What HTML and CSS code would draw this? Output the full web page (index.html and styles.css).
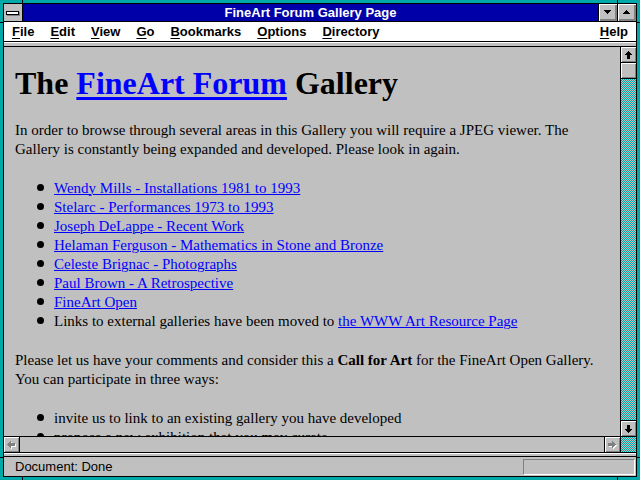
FILE: index.html
```html
<!DOCTYPE html>
<html lang="en">
<head>
<meta charset="utf-8">
<title>FineArt Forum Gallery Page</title>
<link rel="stylesheet" href="styles.css">
</head>
<body>
<div class="window">
  <div class="frame">
    <div class="titlebar">
      <div class="sysmenu"><span class="sysbar"></span></div>
      <div class="title">FineArt Forum Gallery Page</div>
      <div class="tbtn"><svg width="7" height="4" viewBox="0 0 7 4"><path d="M0 0h7v1h-1v1h-1v1h-1v1h-1v-1h-1v-1h-1v-1h-1z"/></svg></div>
      <div class="tbtn"><svg width="7" height="4" viewBox="0 0 7 4"><path d="M3 0h1v1h1v1h1v1h1v1h-7v-1h1v-1h1v-1h1z"/></svg></div>
    </div>
    <div class="menubar">
      <span class="mi"><u>F</u>ile</span>
      <span class="mi"><u>E</u>dit</span>
      <span class="mi"><u>V</u>iew</span>
      <span class="mi"><u>G</u>o</span>
      <span class="mi"><u>B</u>ookmarks</span>
      <span class="mi"><u>O</u>ptions</span>
      <span class="mi"><u>D</u>irectory</span>
      <span class="mi help"><u>H</u>elp</span>
    </div>
    <div class="sep-top"></div>
    <div class="main">
      <div class="pane">
        <div class="viewport">
          <h1>The <a href="#">FineArt Forum</a> Gallery</h1>
          <p>In order to browse through several areas in this Gallery you will require a JPEG viewer. The Gallery is constantly being expanded and developed. Please look in again.</p>
          <ul>
            <li><a href="#">Wendy Mills - Installations 1981 to 1993</a></li>
            <li><a href="#">Stelarc - Performances 1973 to 1993</a></li>
            <li><a href="#">Joseph DeLappe - Recent Work</a></li>
            <li><a href="#">Helaman Ferguson - Mathematics in Stone and Bronze</a></li>
            <li><a href="#">Celeste Brignac - Photographs</a></li>
            <li><a href="#">Paul Brown - A Retrospective</a></li>
            <li><a href="#">FineArt Open</a></li>
            <li>Links to external galleries have been moved to <a href="#">the WWW Art Resource Page</a></li>
          </ul>
          <p>Please let us have your comments and consider this a <b>Call for Art</b> for the FineArt Open Gallery. You can participate in three ways:</p>
          <ul>
            <li>invite us to link to an existing gallery you have developed</li>
            <li>propose a new exhibition that you may curate</li>
            <li>submit your own work to the FineArt Open</li>
          </ul>
        </div>
        <div class="hscroll">
          <div class="sbtn hbtn left"><svg width="9" height="8" viewBox="0 0 9 8"><path class="hi" d="M1 4h1v-1h1v-1h1v-1h1v2h4v3h-4v2h-1v-1h-1v-1h-1v-1h-1z"/><path class="lo" d="M0 3h1v-1h1v-1h1v-1h1v2h4v3h-4v2h-1v-1h-1v-1h-1v-1h-1z"/></svg></div>
          <div class="htrack"></div>
          <div class="sbtn hbtn right"><svg width="9" height="8" viewBox="0 0 9 8"><path class="hi" d="M9 4h-1v-1h-1v-1h-1v-1h-1v2h-4v3h4v2h1v-1h1v-1h1v-1h1z"/><path class="lo" d="M8 3h-1v-1h-1v-1h-1v-1h-1v2h-4v3h4v2h1v-1h1v-1h1v-1h1z"/></svg></div>
        </div>
      </div>
      <div class="vscroll">
        <div class="sbtn vbtn up"><svg width="7" height="8" viewBox="0 0 7 8"><path d="M3 0h1v1h1v1h1v1h1v1h-2v4h-3v-4h-2v-1h1v-1h1v-1h1z"/></svg></div>
        <div class="sbtn vbtn thumb"></div>
        <div class="track"></div>
        <div class="sbtn vbtn down"><svg width="7" height="8" viewBox="0 0 7 8"><path d="M2 0h3v4h2v1h-1v1h-1v1h-1v1h-1v-1h-1v-1h-1v-1h-1v-1h2z"/></svg></div>
        <div class="corner"></div>
      </div>
    </div>
    <div class="sep-bottom"></div>
    <div class="statusbar">
      <span class="status-text">Document: Done</span>
      <span class="progress"></span>
    </div>
  </div>
</div>
</body>
</html>
```

FILE: styles.css
```css
html, body {
  margin: 0;
  padding: 0;
  background: #00a8a8;
}

.window {
  width: 640px;
  height: 480px;
  box-sizing: border-box;
  padding: 3px;
  background-color: #00a8a8;
  background-image:
    linear-gradient(#000, #000), linear-gradient(#000, #000),
    linear-gradient(#000, #000), linear-gradient(#000, #000),
    linear-gradient(#000, #000), linear-gradient(#000, #000),
    linear-gradient(#000, #000), linear-gradient(#000, #000);
  background-repeat: no-repeat;
  background-size: 1px 3px, 1px 3px, 1px 3px, 1px 3px, 3px 1px, 3px 1px, 3px 1px, 3px 1px;
  background-position: 22px 0, 617px 0, 22px 477px, 617px 477px, 0 22px, 637px 22px, 0 457px, 637px 457px;
}

.frame {
  height: 100%;
  box-sizing: border-box;
  border: 1px solid #000;
  background: #c0c0c0;
  display: flex;
  flex-direction: column;
  font-family: "Liberation Sans", Arial, sans-serif;
}

/* Title bar */
.titlebar {
  height: 17px;
  flex: 0 0 auto;
  border-bottom: 1px solid #000;
  background: #0000a8;
  display: flex;
}

.sysmenu {
  width: 18px;
  border-right: 1px solid #000;
  background: #c0c0c0;
  display: flex;
  align-items: center;
  justify-content: center;
}

.sysbar {
  width: 11px;
  height: 2px;
  border: 1px solid #000;
  background: #fff;
  box-shadow: 1px 1px 0 #808080;
  margin: 0 1px 0 0;
}

.title {
  flex: 1;
  text-align: center;
  color: #fff;
  font-weight: bold;
  font-size: 13px;
  line-height: 17px;
}

.tbtn {
  width: 18px;
  border-left: 1px solid #000;
  background: #c0c0c0;
  box-shadow: inset 1px 1px 0 #fff, inset -1px -1px 0 #808080, inset -2px -2px 0 #808080;
  display: flex;
  align-items: center;
  justify-content: center;
}

.tbtn svg {
  display: block;
  fill: #000;
  margin: 0 1px 1px 0;
}

/* Menu bar */
.menubar {
  height: 19px;
  flex: 0 0 auto;
  background: #fff;
  display: flex;
  font-weight: bold;
  font-size: 13px;
  line-height: 19px;
  color: #000;
}

.mi {
  padding: 0 8px;
}

.mi u {
  text-decoration-thickness: 1px;
  text-underline-offset: 2px;
}

.help {
  margin-left: auto;
}

.sep-top {
  height: 4px;
  flex: 0 0 auto;
  border-top: 1px solid #000;
  border-bottom: 1px solid #000;
  background: linear-gradient(#fff 0 1px, #c0c0c0 1px);
}

/* Main area */
.main {
  flex: 1;
  min-height: 0;
  display: flex;
}

.pane {
  flex: 1;
  min-width: 0;
  display: flex;
  flex-direction: column;
}

.viewport {
  flex: 1;
  min-height: 0;
  overflow: hidden;
  padding: 18px 11px 0 11px;
  font-family: "Liberation Serif", "Times New Roman", serif;
  font-size: 15px;
  line-height: 19px;
  color: #000;
}

.viewport a {
  color: #0000ff;
  text-decoration: underline;
  text-decoration-thickness: 1px;
}

.viewport h1 {
  margin: 0;
  font-size: 32px;
  line-height: 36px;
  font-weight: bold;
}

.viewport h1 a {
  text-decoration-thickness: 3px;
  text-underline-offset: 3px;
}

.viewport p {
  margin: 20px 0 0;
}

.viewport ul {
  margin: 20px 0 0;
  padding: 0 0 0 22px;
  list-style: none;
}

.viewport li::before {
  content: "";
  display: inline-block;
  width: 7px;
  height: 7px;
  border-radius: 50%;
  background: #000;
  margin-right: 10px;
  vertical-align: 2px;
}

/* Scroll bars */
.sbtn {
  background: #c0c0c0;
  box-shadow: inset 1px 1px 0 #fff, inset -1px -1px 0 #808080;
  display: flex;
  align-items: center;
  justify-content: center;
  box-sizing: border-box;
}

.sbtn svg {
  display: block;
}

.hscroll {
  height: 15px;
  flex: 0 0 auto;
  border-top: 1px solid #000;
  display: flex;
  background: #c0c0c0;
}

.hbtn {
  width: 16px;
}

.hbtn.left {
  border-right: 1px solid #000;
}

.hbtn.right {
  border-left: 1px solid #000;
}

.hbtn .hi {
  fill: #fff;
}

.hbtn .lo {
  fill: #808080;
}

.htrack {
  flex: 1;
}

.vscroll {
  width: 15px;
  flex: 0 0 auto;
  border-left: 1px solid #000;
  display: flex;
  flex-direction: column;
}

.vbtn {
  height: 16px;
  flex: 0 0 auto;
}

.vbtn.up,
.vbtn.thumb {
  border-bottom: 1px solid #000;
}

.vbtn.down {
  border-top: 1px solid #000;
  border-bottom: 1px solid #000;
  height: 17px;
}

.vbtn svg {
  fill: #000;
}

.track,
.corner {
  background-color: #c0c0c0;
  background-image: conic-gradient(#00a8a8 25%, #c0c0c0 0 50%, #00a8a8 0 75%, #c0c0c0 0);
  background-size: 2px 2px;
}

.track {
  flex: 1;
}

.corner {
  height: 15px;
  flex: 0 0 auto;
}

.sep-bottom {
  height: 3px;
  flex: 0 0 auto;
  border-top: 1px solid #000;
  border-bottom: 1px solid #000;
  background: linear-gradient(#fff 0 1px, #c0c0c0 1px);
}

/* Status bar */
.statusbar {
  height: 19px;
  flex: 0 0 auto;
  display: flex;
  align-items: center;
  padding: 0 1px 0 11px;
  font-size: 13px;
  color: #000;
}

.status-text {
  flex: 1;
  line-height: 19px;
}

.progress {
  width: 110px;
  height: 14px;
  border: 1px solid;
  border-color: #808080 #fff #fff #808080;
}
```
